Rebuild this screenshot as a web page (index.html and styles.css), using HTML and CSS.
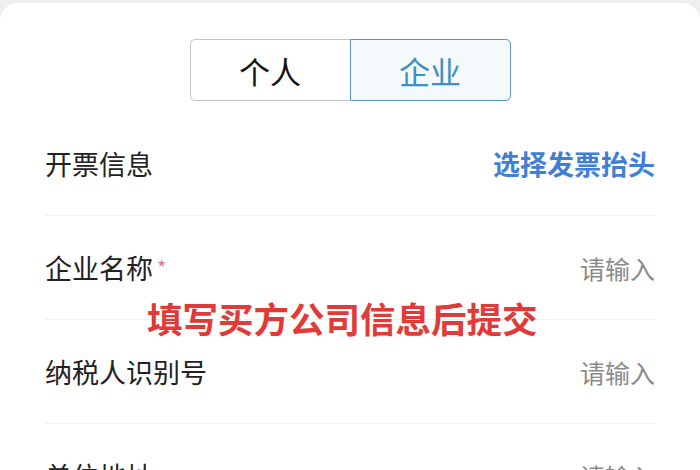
FILE: index.html
```html
<!DOCTYPE html>
<html lang="zh-CN">
<head>
  <meta charset="UTF-8">
  <meta name="viewport" content="width=device-width, initial-scale=1.0">
  <title>开票信息</title>
  <link rel="stylesheet" href="styles.css">
</head>
<body>
  <div class="card">
    <!-- 抬头类型切换 -->
    <div class="tabs">
      <div class="tab">个人</div>
      <div class="tab active">企业</div>
    </div>

    <!-- 开票信息表单 -->
    <div class="row">
      <span class="label">开票信息</span>
      <span class="link">选择发票抬头</span>
    </div>
    <div class="row">
      <span class="label">企业名称<i class="star">*</i></span>
      <span class="hint">请输入</span>
    </div>
    <div class="row">
      <span class="label">纳税人识别号</span>
      <span class="hint">请输入</span>
    </div>
    <div class="row">
      <span class="label">单位地址</span>
      <span class="hint">请输入</span>
    </div>

    <div class="note">填写买方公司信息后提交</div>
  </div>
</body>
</html>
```

FILE: styles.css
```css
body {
  margin: 0;
  padding-top: 3px;
  background-color: #efefef;
  font-family: "Noto Sans CJK SC", "Noto Sans", sans-serif;
  overflow: hidden;
}
.card {
  position: relative;
  background-color: #fff;
  border-radius: 18px 18px 0 0;
  padding: 36px 45px 0;
  height: 600px;
}
.tabs {
  display: flex;
  justify-content: center;
  margin-bottom: 11px;
}
.tab {
  width: 159px;
  height: 60px;
  display: flex;
  align-items: center;
  justify-content: center;
  font-size: 31px;
  color: #141414;
  border: 1px solid #c6c6c6;
}
.tab:first-child {
  border-radius: 5px 0 0 5px;
  border-right: none;
}
.tab.active {
  color: #3e8ec4;
  background-color: #f4f9fc;
  border-color: #5d96b8;
  border-radius: 0 5px 5px 0;
}
.row {
  height: 103px;
  display: flex;
  align-items: center;
  justify-content: space-between;
  border-bottom: 1px solid #f0f0f0;
}
.label {
  font-size: 27px;
  color: #222;
}
.star {
  font-style: normal;
  color: #e07a7a;
  font-size: 20px;
  margin-left: 4px;
  vertical-align: 3px;
}
.link {
  font-size: 27px;
  font-weight: bold;
  color: #3f7fd6;
}
.hint {
  font-size: 25px;
  color: #8a8a8a;
}
.note {
  position: absolute;
  left: 147px;
  top: 289px;
  font-size: 35.5px;
  font-weight: bold;
  color: #e03b38;
  white-space: nowrap;
}
```
